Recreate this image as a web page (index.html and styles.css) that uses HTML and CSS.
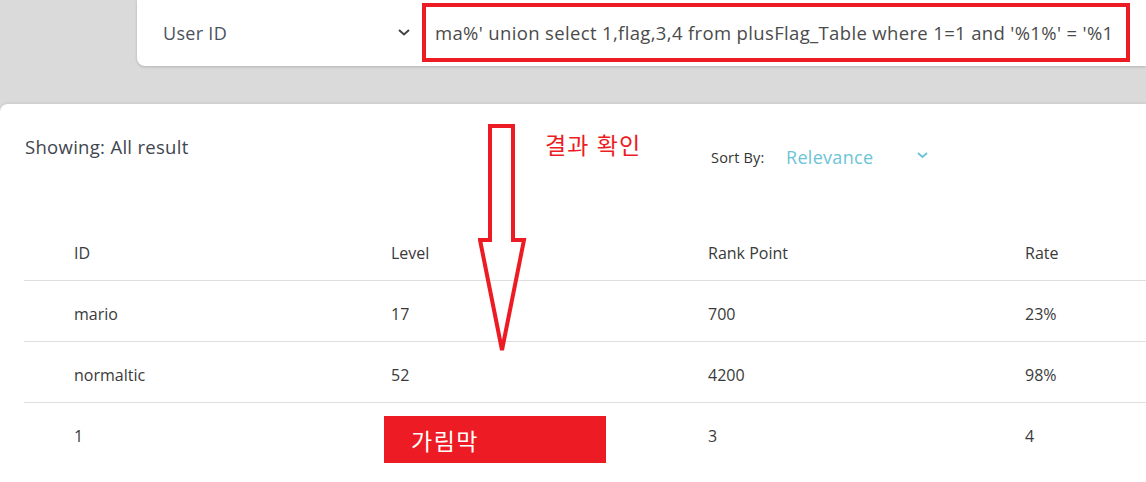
FILE: index.html
```html
<!DOCTYPE html>
<html lang="ko">
<head>
<meta charset="utf-8">
<link rel="stylesheet" href="styles.css">
</head>
<body>
<div class="page">
  <header class="search-bar">
    <div class="search-card">
      <div class="field-select">
        <span class="field-label">User ID</span>
        <svg class="chev-dark" width="12" height="7" viewBox="0 0 12 7"><path d="M1 1 L6 5.5 L11 1" fill="none" stroke="#444" stroke-width="2"/></svg>
      </div>
      <div class="field-input">ma%' union select 1,flag,3,4 from plusFlag_Table where 1=1 and '%1%' = '%1</div>
    </div>
  </header>

  <main class="panel">
    <div class="toolbar">
      <div class="showing">Showing: All result</div>
      <div class="sort">
        <span class="sort-label">Sort By:</span>
        <span class="sort-select">Relevance
          <svg class="chev-cyan" width="11" height="7" viewBox="0 0 11 7"><path d="M1 1 L5.5 5 L10 1" fill="none" stroke="#6cc4d6" stroke-width="2"/></svg>
        </span>
      </div>
    </div>

    <div class="table">
      <div class="row head">
        <div class="cell">ID</div><div class="cell">Level</div><div class="cell">Rank Point</div><div class="cell">Rate</div>
      </div>
      <div class="row">
        <div class="cell">mario</div><div class="cell">17</div><div class="cell">700</div><div class="cell">23%</div>
      </div>
      <div class="row">
        <div class="cell">normaltic</div><div class="cell">52</div><div class="cell">4200</div><div class="cell">98%</div>
      </div>
      <div class="row last">
        <div class="cell">1</div><div class="cell"></div><div class="cell">3</div><div class="cell">4</div>
      </div>
    </div>
  </main>

  <div class="note">결과 확인</div>
  <svg class="arrow" width="60" height="240" viewBox="0 0 60 240">
    <polygon points="12,2 35,2 35,116 46,116 24,226 2,116 12,116" fill="none" stroke="#ed1c24" stroke-width="4" stroke-linejoin="miter"/>
  </svg>
  <div class="mask">가림막</div>
</div>
</body>
</html>
```

FILE: styles.css
```css
* { box-sizing: border-box; }
html, body { margin: 0; padding: 0; }
body {
  background: #dadada;
  font-family: "Open Sans", "Noto Sans", sans-serif;
  overflow: hidden;
  width: 1146px;
  height: 482px;
}
.page {
  position: relative;
  width: 1146px;
  height: 482px;
  overflow: hidden;
}
.search-bar {
  height: 104px;
  padding-left: 137px;
}
.search-card {
  height: 66px;
  background: #fff;
  border-radius: 0 0 0 8px;
  box-shadow: 0 1px 3px rgba(0,0,0,0.18);
  display: flex;
  align-items: flex-start;
}
.field-select {
  width: 285px;
  height: 66px;
  padding-left: 26px;
  padding-right: 12px;
  display: flex;
  align-items: center;
  justify-content: space-between;
}
.field-label {
  font-size: 18px;
  letter-spacing: 0.3px;
  color: #4a525c;
}
.chev-dark { margin-top: -2px; }
.field-input {
  margin-top: 3px;
  width: 708px;
  height: 59px;
  border: 4px solid #ed1c24;
  padding-left: 9px;
  display: flex;
  align-items: center;
  font-size: 18.5px;
  letter-spacing: 0.35px;
  color: #4b4b4b;
  white-space: nowrap;
  overflow: hidden;
}
.panel {
  background: #fff;
  height: 378px;
  border-radius: 8px 0 0 0;
  box-shadow: 0 -1px 3px rgba(0,0,0,0.08);
  padding-top: 31px;
  overflow: hidden;
}
.toolbar {
  display: grid;
  grid-template-columns: 686px auto;
  padding-left: 25px;
  height: 85px;
}
.showing {
  font-size: 18.5px;
  line-height: 24px;
  letter-spacing: 0.3px;
  color: #3f4650;
}
.sort {
  display: flex;
  align-items: center;
  margin-top: 10px;
  height: 24px;
}
.sort-label {
  font-size: 14.5px;
  letter-spacing: 0.2px;
  color: #333;
  width: 75px;
}
.sort-select {
  font-size: 18px;
  letter-spacing: 0.3px;
  color: #6cc4d6;
  display: flex;
  align-items: center;
  width: 142px;
  justify-content: space-between;
}
.chev-cyan { margin-top: -4px; }
.table {
  margin-left: 24px;
  width: 1268px;
}
.row {
  display: grid;
  grid-template-columns: repeat(4, 317px);
  border-bottom: 1px solid #dedede;
  height: 61px;
}
.row.last { border-bottom: none; }
.cell {
  padding-left: 50px;
  padding-top: 21px;
  font-size: 16px;
  line-height: 24px;
  color: #3a3a3a;
}
.note {
  position: absolute;
  left: 545px;
  top: 128px;
  font-family: "Noto Sans CJK KR", sans-serif;
  font-size: 23px;
  letter-spacing: 1px;
  line-height: 32px;
  color: #ed1c24;
}
.arrow {
  position: absolute;
  left: 478px;
  top: 124px;
}
.mask {
  position: absolute;
  left: 384px;
  top: 416px;
  width: 222px;
  height: 47px;
  background: #ed1c24;
  color: #fff;
  font-family: "Noto Sans CJK KR", sans-serif;
  font-size: 23px;
  letter-spacing: 1.5px;
  padding-left: 27px;
  display: flex;
  align-items: center;
}
```
